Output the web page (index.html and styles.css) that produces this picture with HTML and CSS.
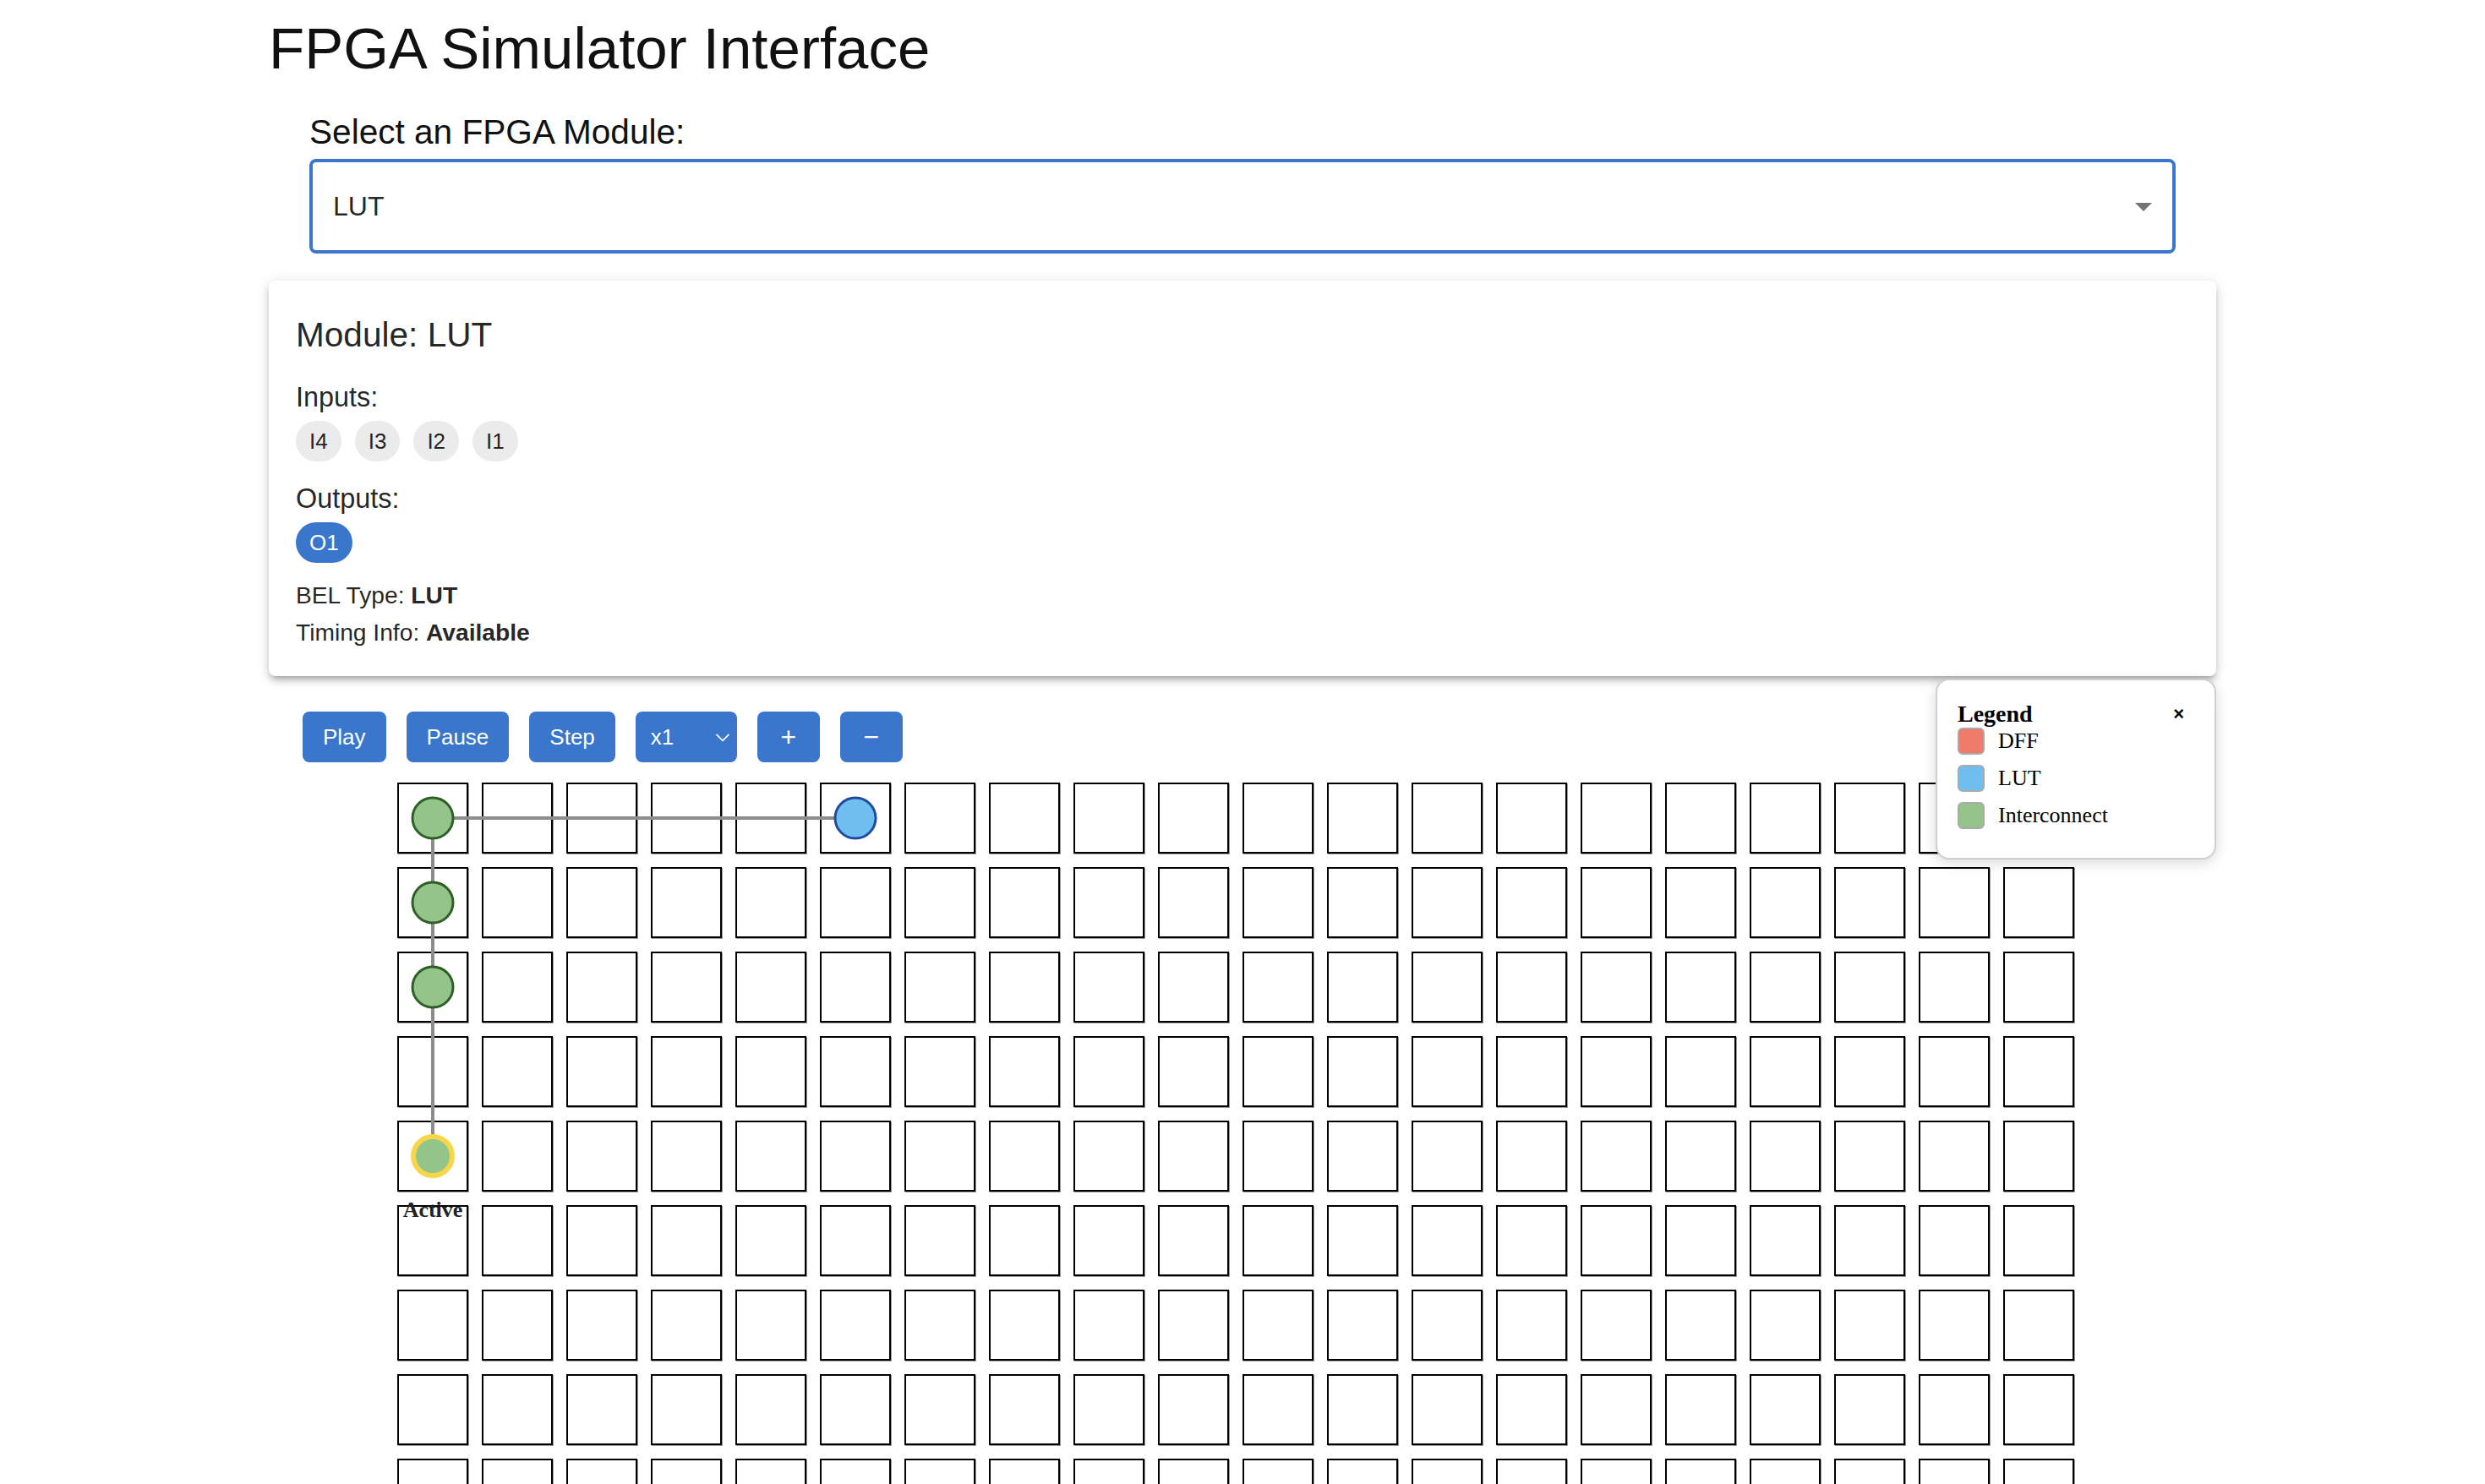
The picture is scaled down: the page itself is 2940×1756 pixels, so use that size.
FILE: index.html
```html
<!DOCTYPE html>
<html lang="en">
<head>
<meta charset="utf-8">
<title>FPGA Simulator Interface</title>
<link rel="stylesheet" href="styles.css">
</head>
<body>
<div class="page">
  <h1 class="title">FPGA Simulator Interface</h1>

  <section class="picker">
    <label class="picker-label" for="module">Select an FPGA Module:</label>
    <div class="select-box">
      <select id="module" class="module-select">
        <option>LUT</option>
        <option>DFF</option>
        <option>Interconnect</option>
      </select>
      <svg class="select-arrow" viewBox="0 0 24 24" aria-hidden="true"><path d="M7 10l5 5 5-5z"/></svg>
    </div>
  </section>

  <section class="card">
    <h2 class="card-title">Module: LUT</h2>
    <div class="pin-label">Inputs:</div>
    <div class="chips">
      <span class="chip">I4</span>
      <span class="chip">I3</span>
      <span class="chip">I2</span>
      <span class="chip">I1</span>
    </div>
    <div class="pin-label">Outputs:</div>
    <div class="chips">
      <span class="chip chip-primary">O1</span>
    </div>
    <p class="meta">BEL Type: <strong>LUT</strong></p>
    <p class="meta">Timing Info: <strong>Available</strong></p>
  </section>

  <section class="sim">
    <div class="controls">
      <button class="btn">Play</button>
      <button class="btn">Pause</button>
      <button class="btn">Step</button>
      <div class="speed">
        <select class="speed-select">
          <option>x1</option>
          <option>x2</option>
          <option>x4</option>
        </select>
        <svg class="speed-arrow" viewBox="0 0 10 6" aria-hidden="true"><path d="M0.5 0.5 L5 5 L9.5 0.5"/></svg>
      </div>
      <button class="btn btn-icon">+</button>
      <button class="btn btn-icon">&minus;</button>
    </div>

    <div class="board">
      <div class="grid">
        <div class="cell"></div><div class="cell"></div><div class="cell"></div><div class="cell"></div><div class="cell"></div><div class="cell"></div><div class="cell"></div><div class="cell"></div><div class="cell"></div><div class="cell"></div><div class="cell"></div><div class="cell"></div><div class="cell"></div><div class="cell"></div><div class="cell"></div><div class="cell"></div><div class="cell"></div><div class="cell"></div><div class="cell"></div><div class="cell"></div>
        <div class="cell"></div><div class="cell"></div><div class="cell"></div><div class="cell"></div><div class="cell"></div><div class="cell"></div><div class="cell"></div><div class="cell"></div><div class="cell"></div><div class="cell"></div><div class="cell"></div><div class="cell"></div><div class="cell"></div><div class="cell"></div><div class="cell"></div><div class="cell"></div><div class="cell"></div><div class="cell"></div><div class="cell"></div><div class="cell"></div>
        <div class="cell"></div><div class="cell"></div><div class="cell"></div><div class="cell"></div><div class="cell"></div><div class="cell"></div><div class="cell"></div><div class="cell"></div><div class="cell"></div><div class="cell"></div><div class="cell"></div><div class="cell"></div><div class="cell"></div><div class="cell"></div><div class="cell"></div><div class="cell"></div><div class="cell"></div><div class="cell"></div><div class="cell"></div><div class="cell"></div>
        <div class="cell"></div><div class="cell"></div><div class="cell"></div><div class="cell"></div><div class="cell"></div><div class="cell"></div><div class="cell"></div><div class="cell"></div><div class="cell"></div><div class="cell"></div><div class="cell"></div><div class="cell"></div><div class="cell"></div><div class="cell"></div><div class="cell"></div><div class="cell"></div><div class="cell"></div><div class="cell"></div><div class="cell"></div><div class="cell"></div>
        <div class="cell"></div><div class="cell"></div><div class="cell"></div><div class="cell"></div><div class="cell"></div><div class="cell"></div><div class="cell"></div><div class="cell"></div><div class="cell"></div><div class="cell"></div><div class="cell"></div><div class="cell"></div><div class="cell"></div><div class="cell"></div><div class="cell"></div><div class="cell"></div><div class="cell"></div><div class="cell"></div><div class="cell"></div><div class="cell"></div>
        <div class="cell"></div><div class="cell"></div><div class="cell"></div><div class="cell"></div><div class="cell"></div><div class="cell"></div><div class="cell"></div><div class="cell"></div><div class="cell"></div><div class="cell"></div><div class="cell"></div><div class="cell"></div><div class="cell"></div><div class="cell"></div><div class="cell"></div><div class="cell"></div><div class="cell"></div><div class="cell"></div><div class="cell"></div><div class="cell"></div>
        <div class="cell"></div><div class="cell"></div><div class="cell"></div><div class="cell"></div><div class="cell"></div><div class="cell"></div><div class="cell"></div><div class="cell"></div><div class="cell"></div><div class="cell"></div><div class="cell"></div><div class="cell"></div><div class="cell"></div><div class="cell"></div><div class="cell"></div><div class="cell"></div><div class="cell"></div><div class="cell"></div><div class="cell"></div><div class="cell"></div>
        <div class="cell"></div><div class="cell"></div><div class="cell"></div><div class="cell"></div><div class="cell"></div><div class="cell"></div><div class="cell"></div><div class="cell"></div><div class="cell"></div><div class="cell"></div><div class="cell"></div><div class="cell"></div><div class="cell"></div><div class="cell"></div><div class="cell"></div><div class="cell"></div><div class="cell"></div><div class="cell"></div><div class="cell"></div><div class="cell"></div>
        <div class="cell"></div><div class="cell"></div><div class="cell"></div><div class="cell"></div><div class="cell"></div><div class="cell"></div><div class="cell"></div><div class="cell"></div><div class="cell"></div><div class="cell"></div><div class="cell"></div><div class="cell"></div><div class="cell"></div><div class="cell"></div><div class="cell"></div><div class="cell"></div><div class="cell"></div><div class="cell"></div><div class="cell"></div><div class="cell"></div>
        <div class="cell"></div><div class="cell"></div><div class="cell"></div><div class="cell"></div><div class="cell"></div><div class="cell"></div><div class="cell"></div><div class="cell"></div><div class="cell"></div><div class="cell"></div><div class="cell"></div><div class="cell"></div><div class="cell"></div><div class="cell"></div><div class="cell"></div><div class="cell"></div><div class="cell"></div><div class="cell"></div><div class="cell"></div><div class="cell"></div>
      </div>
      <svg class="wires" viewBox="0 0 1000 500" width="1000" height="500" aria-hidden="true">
        <path class="wire" d="M21 21 H271"/>
        <path class="wire" d="M21 21 V221"/>
        <circle class="node node-ic" cx="21" cy="21" r="12"/>
        <circle class="node node-ic" cx="21" cy="71" r="12"/>
        <circle class="node node-ic" cx="21" cy="121" r="12"/>
        <circle class="node node-lut" cx="271" cy="21" r="12"/>
        <circle class="node node-active" cx="21" cy="221" r="11.5"/>
        <text class="node-label" x="21" y="257">Active</text>
      </svg>
    </div>

    <aside class="legend">
      <div class="legend-head">
        <strong class="legend-title">Legend</strong>
        <button class="legend-close" aria-label="Close legend">&times;</button>
      </div>
      <div class="legend-item"><span class="swatch swatch-dff"></span>DFF</div>
      <div class="legend-item"><span class="swatch swatch-lut"></span>LUT</div>
      <div class="legend-item"><span class="swatch swatch-ic"></span>Interconnect</div>
    </aside>
  </section>
</div>
</body>
</html>
```

FILE: styles.css
```css
html {
  scrollbar-width: none;
}

@media (min-width: 2000px) {
  html {
    zoom: 2;
  }
}

body {
  margin: 8px;
  background: #fff;
  color: rgba(0, 0, 0, 0.87);
  font-family: "Liberation Sans", Arial, Helvetica, sans-serif;
}

.page {
  max-width: 1200px;
  margin: 0 auto;
  padding: 0 24px;
  box-sizing: border-box;
}

.title {
  margin: 0 0 12px;
  font-size: 34.5px;
  line-height: 42px;
  font-weight: 400;
  color: #111;
}

/* module picker */
.picker {
  padding: 0 24px;
}

.picker-label {
  display: block;
  font-size: 20.3px;
  line-height: 32px;
  color: #111;
}

.select-box {
  position: relative;
}

.module-select {
  appearance: none;
  -webkit-appearance: none;
  display: block;
  width: 100%;
  height: 56px;
  margin: 0;
  padding: 0 32px 0 12px;
  border: 2px solid #3a76cc;
  border-radius: 4px;
  background: #fff;
  color: rgba(0, 0, 0, 0.87);
  font-family: inherit;
  font-size: 16px;
  outline: none;
}

.select-arrow {
  position: absolute;
  right: 7px;
  top: 16px;
  width: 24px;
  height: 24px;
  fill: #757575;
  pointer-events: none;
}

/* module card */
.card {
  margin-top: 16px;
  padding: 16px 16px 15px;
  background: #fff;
  border-radius: 4px;
  box-shadow: 0 3px 3px -2px rgba(0, 0, 0, 0.2), 0 3px 4px 0 rgba(0, 0, 0, 0.14), 0 1px 8px 0 rgba(0, 0, 0, 0.12);
}

.card-title {
  margin: 0 0 7px;
  font-size: 20.3px;
  line-height: 32px;
  font-weight: 400;
}

.pin-label {
  font-size: 16.2px;
  line-height: 28px;
}

.chips {
  display: flex;
  gap: 8px;
  margin-bottom: 8px;
}

.chip {
  display: inline-flex;
  align-items: center;
  height: 24px;
  padding: 0 8px;
  border-radius: 12px;
  background: #ebebeb;
  font-size: 13px;
  color: rgba(0, 0, 0, 0.87);
}

.chip-primary {
  background: #3a76cc;
  color: #fff;
}

.meta {
  margin: 0;
  font-size: 14.1px;
  line-height: 22px;
}

.meta strong {
  font-weight: 700;
}

/* simulator */
.sim {
  position: relative;
  padding: 21px 20px 20px;
}

.controls {
  display: flex;
  gap: 12px;
  align-items: center;
}

.btn {
  height: 30px;
  padding: 0 12px;
  border: none;
  border-radius: 4px;
  background: #3a76cc;
  color: #fff;
  font-family: "Liberation Sans", Arial, Helvetica, sans-serif;
  font-size: 13px;
  line-height: 18px;
  cursor: pointer;
}

.btn-icon {
  width: 37px;
  padding: 0;
  font-size: 16px;
}

.speed {
  position: relative;
}

.speed-select {
  appearance: none;
  -webkit-appearance: none;
  display: block;
  width: 60px;
  height: 30px;
  padding: 0 18px 0 9px;
  border: none;
  border-radius: 4px;
  background: #3a76cc;
  color: #fff;
  font-family: "Liberation Sans", Arial, Helvetica, sans-serif;
  font-size: 13px;
  outline: none;
}

.speed-arrow {
  position: absolute;
  right: 4px;
  top: 13px;
  width: 9px;
  height: 5px;
  fill: none;
  stroke: #fff;
  stroke-width: 1;
  pointer-events: none;
}

.board {
  position: relative;
  width: 1000px;
  margin: 12px auto 0;
}

.grid {
  display: grid;
  grid-template-columns: repeat(20, 42px);
  grid-auto-rows: 42px;
  gap: 8px;
}

.cell {
  box-sizing: border-box;
  border: 1px solid #000;
  background: #fff;
  box-shadow: 0.5px 0.5px 0 0 #9a9a9a;
}

.wires {
  position: absolute;
  left: 0;
  top: 0;
  overflow: visible;
  pointer-events: none;
}

.wire {
  fill: none;
  stroke: #8c8c8c;
  stroke-width: 2;
}

.node {
  stroke-width: 1.5;
}

.node-ic {
  fill: #93c58b;
  stroke: #2f5e27;
}

.node-lut {
  fill: #6ebef0;
  stroke: #1f4c9e;
}

.node-active {
  fill: #93c58b;
  stroke: #f8d64a;
  stroke-width: 3;
}

.node-label {
  font-family: "Liberation Serif", "Times New Roman", serif;
  font-size: 13px;
  font-weight: 700;
  text-anchor: middle;
  fill: #222;
}

/* legend */
.legend {
  position: absolute;
  top: 1.5px;
  right: 0;
  width: 166px;
  box-sizing: border-box;
  padding: 12px 12px 11px;
  background: #fff;
  border: 1px solid #cfcfcf;
  border-radius: 8px;
  box-shadow: 0 2px 8px rgba(0, 0, 0, 0.15);
  font-family: "Liberation Serif", "Times New Roman", serif;
  color: #000;
}

.legend-head {
  display: flex;
  justify-content: space-between;
  align-items: center;
  height: 16px;
}

.legend-title {
  font-size: 14px;
  line-height: 16px;
  font-weight: 700;
}

.legend-close {
  padding: 0 6px 0 0;
  border: none;
  background: none;
  color: #000;
  font-family: "Liberation Sans", Arial, sans-serif;
  font-size: 11px;
  font-weight: 700;
  line-height: 12px;
  cursor: pointer;
}

.legend-item {
  display: flex;
  align-items: center;
  gap: 8px;
  height: 16px;
  margin-bottom: 6px;
  font-size: 13px;
}

.swatch {
  width: 16px;
  height: 16px;
  box-sizing: border-box;
  border: 1px solid #aaa;
  border-radius: 3px;
}

.swatch-dff {
  background: #ef7a6a;
}

.swatch-lut {
  background: #6ebef0;
}

.swatch-ic {
  background: #93c58b;
}
```
